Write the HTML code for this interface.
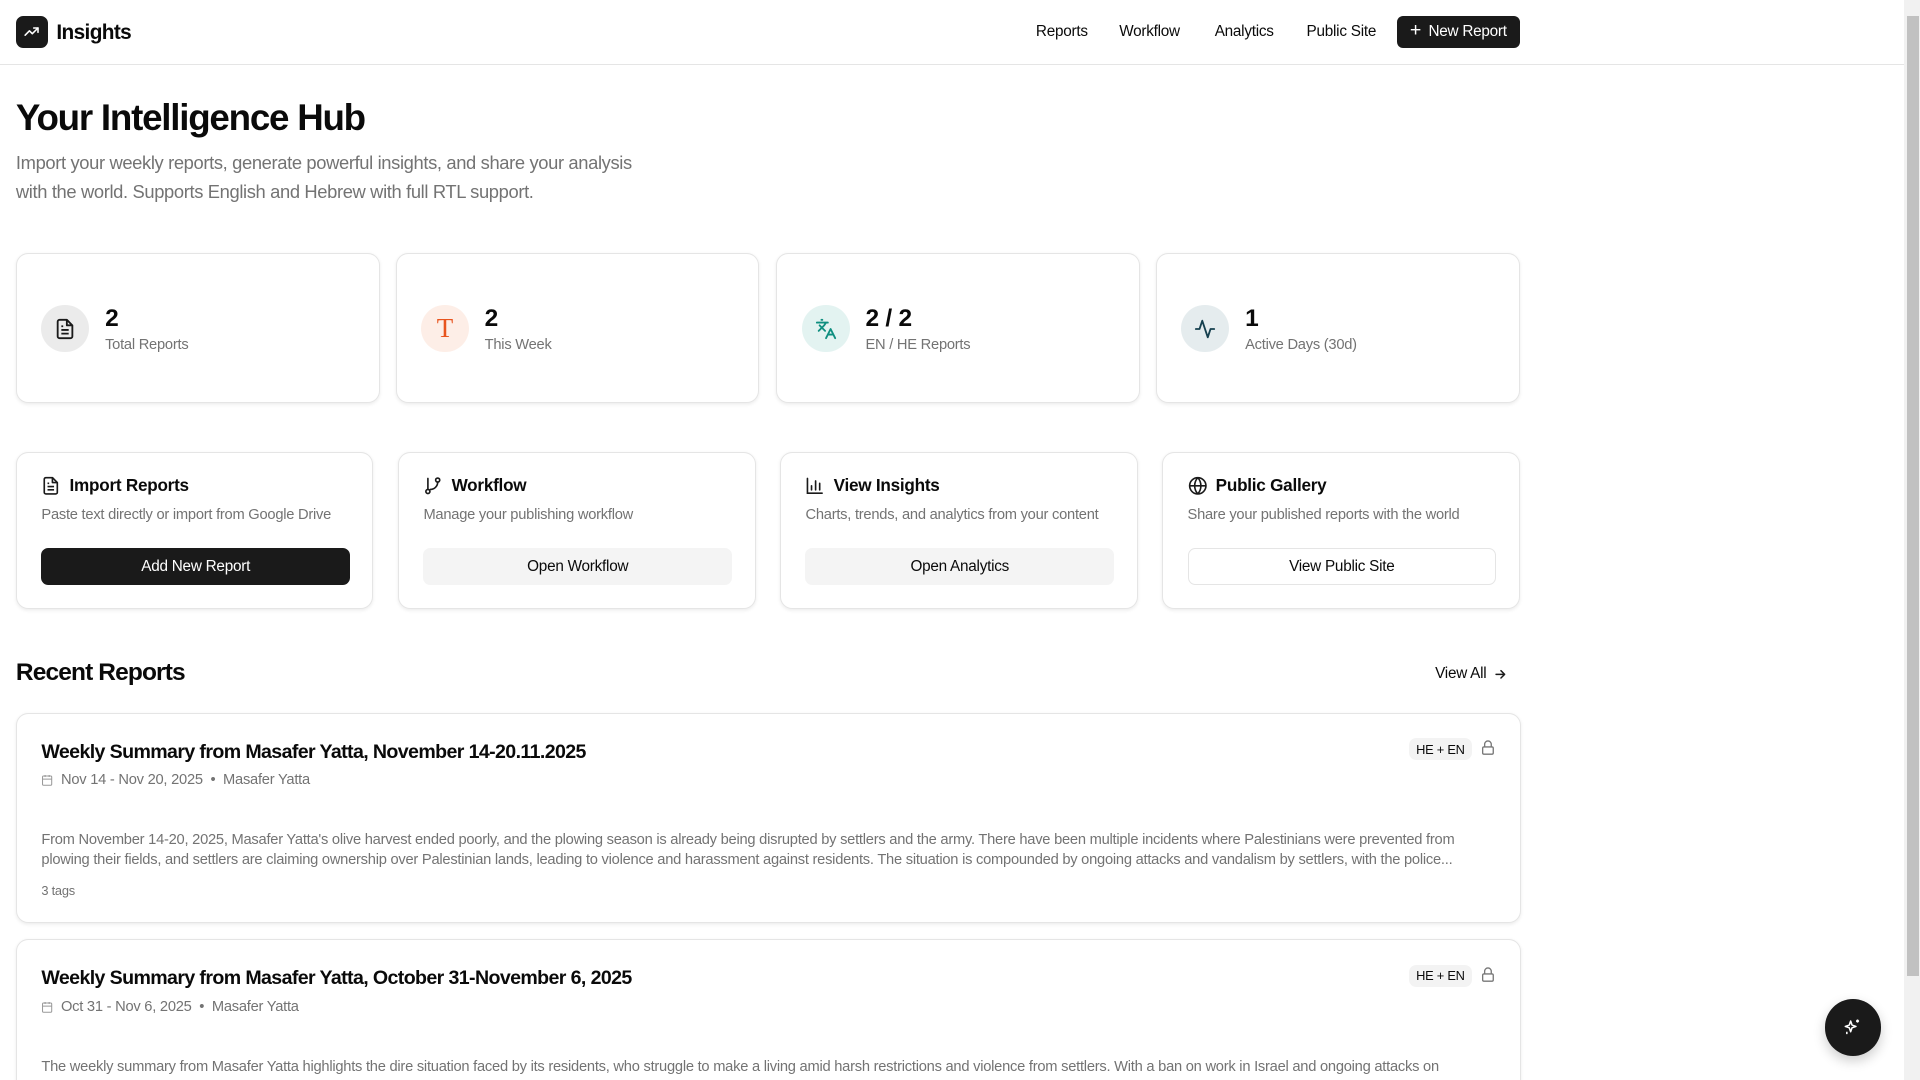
<!DOCTYPE html>
<html><head><meta charset="utf-8">
<style>
html,body{margin:0;padding:0;width:1920px;height:1080px;overflow:hidden;background:#fff;}
*{box-sizing:border-box;}
#w{zoom:1.2245;width:1555px;height:882px;position:relative;font-family:"Liberation Sans",sans-serif;color:#0a0a0a;letter-spacing:-0.2px;}
.abs{position:absolute;}
.hdr{left:0;top:0;width:1555px;height:53px;border-bottom:1px solid #e5e5e5;}
.logo{left:13px;top:13px;width:26px;height:26px;border-radius:6px;background:#1a1a1a;display:flex;align-items:center;justify-content:center;}
.nav{top:19px;font-size:12.5px;font-weight:500;}
.btn-new{left:1141px;top:13px;width:100px;height:26px;border-radius:5px;background:#1a1a1a;color:#fff;font-size:12.5px;display:flex;align-items:center;justify-content:center;gap:6px;}
h1{position:absolute;left:13px;top:79px;margin:0;font-size:30px;font-weight:700;letter-spacing:-1px;}
.sub{left:13px;top:122px;width:530px;font-size:15px;line-height:23px;color:#737373;letter-spacing:-0.3px;}
.card{border:1px solid #e5e5e5;border-radius:10px;box-shadow:0 1px 3px rgba(0,0,0,.08);background:#fff;}
.stat{top:207px;width:297px;height:122px;}
.circ{position:absolute;left:20px;top:41px;width:39px;height:39px;border-radius:50%;display:flex;align-items:center;justify-content:center;}
.num{position:absolute;left:72px;top:41px;font-size:20px;font-weight:700;}
.lbl{position:absolute;left:72px;top:67px;font-size:12px;color:#737373;}
.act{top:369px;width:292px;height:128px;}
.at{position:absolute;left:20px;top:18px;font-size:14px;font-weight:600;display:flex;align-items:center;gap:7px;}
.ad{position:absolute;left:20px;top:44px;font-size:12px;color:#737373;}
.ab{position:absolute;left:20px;top:78px;width:252px;height:30px;border-radius:6px;font-size:12.5px;font-weight:500;display:flex;align-items:center;justify-content:center;}
.rep{left:13px;width:1229px;}
.rt{position:absolute;left:20px;font-size:16px;font-weight:600;letter-spacing:-0.5px;}
.rm{position:absolute;left:20px;font-size:12px;color:#737373;display:flex;align-items:center;gap:6px;}
.rs{position:absolute;left:20px;width:1180px;font-size:12px;line-height:16px;color:#737373;}
.badge{position:absolute;left:1137px;width:51px;height:18px;border-radius:6px;background:#f3f3f3;font-size:10.5px;display:flex;align-items:center;justify-content:center;}
.lock{position:absolute;left:1195px;}
</style></head><body>
<div id="w">
<div class="abs hdr"></div>
<div class="abs logo"><svg width="14" height="14" viewBox="0 0 24 24" fill="none" stroke="#fff" stroke-width="2.2" stroke-linecap="round" stroke-linejoin="round"><path d="M3 17l6-6 4 4 8-8"/><path d="M15 7h6v6"/></svg></div>
<div class="abs" style="left:46px;top:17px;font-size:17px;font-weight:600;letter-spacing:-0.5px">Insights</div>
<div class="abs nav" style="left:846px">Reports</div>
<div class="abs nav" style="left:914px">Workflow</div>
<div class="abs nav" style="left:992px">Analytics</div>
<div class="abs nav" style="left:1067px">Public Site</div>
<div class="abs btn-new"><span style="font-size:16px;font-weight:300;margin-top:-2px">+</span>New Report</div>

<h1>Your Intelligence Hub</h1>
<div class="abs sub">Import your weekly reports, generate powerful insights, and share your analysis with the world. Supports English and Hebrew with full RTL support.</div>

<div class="abs card stat" style="left:13px"><div class="circ" style="background:#ebebeb"><svg width="18" height="18" viewBox="0 0 24 24" fill="none" stroke="#1a1a1a" stroke-width="2" stroke-linejoin="round"><path d="M14 2H6a2 2 0 0 0-2 2v16a2 2 0 0 0 2 2h12a2 2 0 0 0 2-2V8z"/><path d="M14 2v6h6M8 13h8M8 17h8M8 9h2"/></svg></div><div class="num">2</div><div class="lbl">Total Reports</div></div>
<div class="abs card stat" style="left:323px"><div class="circ" style="background:#fdeee7"><span style="font-family:'Liberation Serif',serif;font-size:22px;color:#e8541e;">T</span></div><div class="num">2</div><div class="lbl">This Week</div></div>
<div class="abs card stat" style="left:634px"><div class="circ" style="background:#e3f3f1"><svg width="18" height="18" viewBox="0 0 24 24" fill="none" stroke="#0f8f80" stroke-width="2" stroke-linecap="round" stroke-linejoin="round"><path d="M5 8l6 6M4 14l6-6 2-3M2 5h12M7 2h1M22 22l-5-10-5 10M14 18h6"/></svg></div><div class="num">2 / 2</div><div class="lbl">EN / HE Reports</div></div>
<div class="abs card stat" style="left:944px"><div class="circ" style="background:#e5ecee"><svg width="18" height="18" viewBox="0 0 24 24" fill="none" stroke="#16404f" stroke-width="2" stroke-linecap="round" stroke-linejoin="round"><path d="M22 12h-4l-3 9L9 3l-3 9H2"/></svg></div><div class="num">1</div><div class="lbl">Active Days (30d)</div></div>

<div class="abs card act" style="left:13px"><div class="at"><svg width="16" height="16" viewBox="0 0 24 24" fill="none" stroke="#1a1a1a" stroke-width="2" stroke-linejoin="round"><path d="M14 2H6a2 2 0 0 0-2 2v16a2 2 0 0 0 2 2h12a2 2 0 0 0 2-2V8z"/><path d="M14 2v6h6M8 13h8M8 17h8M8 9h2"/></svg>Import Reports</div><div class="ad">Paste text directly or import from Google Drive</div><div class="ab" style="background:#1a1a1a;color:#fff">Add New Report</div></div>
<div class="abs card act" style="left:325px"><div class="at"><svg width="16" height="16" viewBox="0 0 24 24" fill="none" stroke="#1a1a1a" stroke-width="2" stroke-linecap="round"><circle cx="6" cy="19" r="2.5"/><circle cx="18" cy="5" r="2.5"/><path d="M6 3v13.5M18 7.5a9 9 0 0 1-9 9"/></svg>Workflow</div><div class="ad">Manage your publishing workflow</div><div class="ab" style="background:#f4f4f4">Open Workflow</div></div>
<div class="abs card act" style="left:637px"><div class="at"><svg width="16" height="16" viewBox="0 0 24 24" fill="none" stroke="#1a1a1a" stroke-width="2" stroke-linecap="round"><path d="M3 3v18h18M8 17v-5M13 17V6M18 17v-8"/></svg>View Insights</div><div class="ad">Charts, trends, and analytics from your content</div><div class="ab" style="background:#f4f4f4">Open Analytics</div></div>
<div class="abs card act" style="left:949px"><div class="at"><svg width="16" height="16" viewBox="0 0 24 24" fill="none" stroke="#1a1a1a" stroke-width="2"><circle cx="12" cy="12" r="10"/><path d="M2 12h20M12 2a15 15 0 0 1 0 20M12 2a15 15 0 0 0 0 20"/></svg>Public Gallery</div><div class="ad">Share your published reports with the world</div><div class="ab" style="border:1px solid #e5e5e5">View Public Site</div></div>

<div class="abs" style="left:13px;top:538px;font-size:20px;font-weight:700;letter-spacing:-0.7px">Recent Reports</div>
<div class="abs" style="left:1172px;top:543px;font-size:12.5px;font-weight:500;display:flex;align-items:center;gap:5px">View All <svg width="12" height="12" viewBox="0 0 24 24" fill="none" stroke="#1a1a1a" stroke-width="2.4" stroke-linecap="round" stroke-linejoin="round"><path d="M5 12h14M13 6l6 6-6 6"/></svg></div>

<div class="abs card rep" style="top:582px;height:172px">
<div class="rt" style="top:22px">Weekly Summary from Masafer Yatta, November 14-20.11.2025</div>
<div class="rm" style="top:48px"><svg width="10" height="10" viewBox="0 0 24 24" fill="none" stroke="#999" stroke-width="2"><rect x="3" y="4" width="18" height="18" rx="2"/><path d="M3 10h18M8 2v4M16 2v4"/></svg>Nov 14 - Nov 20, 2025 &nbsp;•&nbsp; Masafer Yatta</div>
<div class="rs" style="top:96px">From November 14-20, 2025, Masafer Yatta's olive harvest ended poorly, and the plowing season is already being disrupted by settlers and the army. There have been multiple incidents where Palestinians were prevented from plowing their fields, and settlers are claiming ownership over Palestinian lands, leading to violence and harassment against residents. The situation is compounded by ongoing attacks and vandalism by settlers, with the police...</div>
<div class="abs" style="left:20px;top:138px;font-size:10.5px;color:#737373">3 tags</div>
<div class="badge" style="top:20px">HE + EN</div>
<svg class="lock" style="top:21px" width="13" height="14" viewBox="0 0 24 24" fill="none" stroke="#777" stroke-width="2"><rect x="4" y="11" width="16" height="11" rx="2"/><path d="M7 11V7a5 5 0 0 1 10 0v4"/></svg>
</div>

<div class="abs card rep" style="top:767px;height:140px">
<div class="rt" style="top:22px">Weekly Summary from Masafer Yatta, October 31-November 6, 2025</div>
<div class="rm" style="top:48px"><svg width="10" height="10" viewBox="0 0 24 24" fill="none" stroke="#999" stroke-width="2"><rect x="3" y="4" width="18" height="18" rx="2"/><path d="M3 10h18M8 2v4M16 2v4"/></svg>Oct 31 - Nov 6, 2025 &nbsp;•&nbsp; Masafer Yatta</div>
<div class="rs" style="top:96px">The weekly summary from Masafer Yatta highlights the dire situation faced by its residents, who struggle to make a living amid harsh restrictions and violence from settlers. With a ban on work in Israel and ongoing attacks on</div>
<div class="badge" style="top:20px">HE + EN</div>
<svg class="lock" style="top:21px" width="13" height="14" viewBox="0 0 24 24" fill="none" stroke="#777" stroke-width="2"><rect x="4" y="11" width="16" height="11" rx="2"/><path d="M7 11V7a5 5 0 0 1 10 0v4"/></svg>
</div>

<div class="abs" style="left:1490px;top:816px;width:46px;height:46px;border-radius:50%;background:#1a1a1a;box-shadow:0 4px 10px rgba(0,0,0,.2);display:flex;align-items:center;justify-content:center"><svg width="15" height="15" viewBox="0 0 24 24" fill="none" stroke="#fff" stroke-width="2" stroke-linejoin="round"><path d="M10 4l1.8 5.2L17 11l-5.2 1.8L10 18l-1.8-5.2L3 11l5.2-1.8z"/><path d="M19 2v4M17 4h4M5 18v3"/></svg></div>

<div class="abs" style="left:1555px;top:0;width:13px;height:882px;background:#f1f1f1"></div>
<div class="abs" style="left:1557px;top:13px;width:10px;height:784px;background:#c1c1c1"></div>
</div>
</body></html>
